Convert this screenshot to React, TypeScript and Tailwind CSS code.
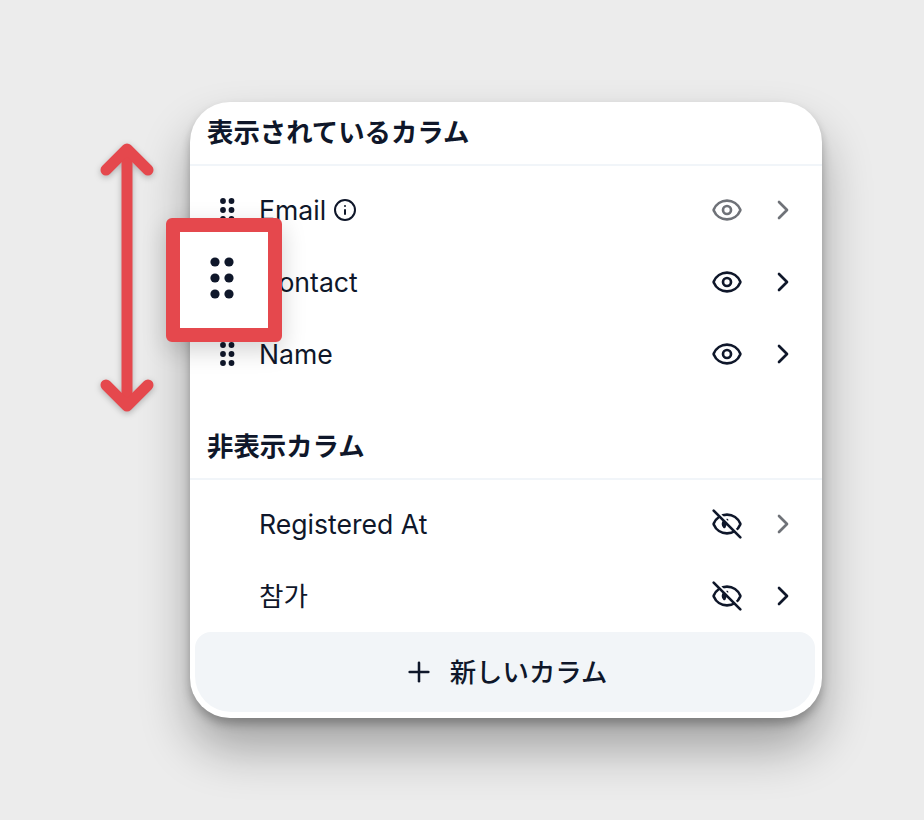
import { Eye, ChevronRight, Info, Plus } from "lucide-react";

const font = "[font-family:Inter,'Noto_Sans_CJK_JP','Noto_Sans_CJK_KR',sans-serif]";

function EyeOffIcon() {
  return (
    <svg width="32" height="32" viewBox="0 0 24 24" fill="none" stroke="currentColor" strokeWidth="2" strokeLinecap="round" strokeLinejoin="round">
      <path d="M2.06 12.35a1 1 0 0 1 0-.7 10.75 10.75 0 0 1 19.88 0 1 1 0 0 1 0 .7 10.75 10.75 0 0 1-19.88 0" />
      <path d="M12 9a3 3 0 0 0-3 3 3 3 0 0 0 1 2.2z" fill="currentColor" />
      <path d="M3.5 1.5l20 20" stroke="#ffffff" strokeWidth="1.4" />
      <path d="M2 2l20 20" />
    </svg>
  );
}

function Grip({ className }: { className?: string }) {
  return (
    <svg className={className} width="20" height="28" viewBox="0 0 20 28" fill="currentColor">
      <circle cx="6" cy="5" r="2.9" />
      <circle cx="14.5" cy="5" r="2.9" />
      <circle cx="6" cy="14" r="2.9" />
      <circle cx="14.5" cy="14" r="2.9" />
      <circle cx="6" cy="23" r="2.9" />
      <circle cx="14.5" cy="23" r="2.9" />
    </svg>
  );
}

function Row({ label, grip, info, hidden, dim, chevDim }: { label: string; grip?: boolean; info?: boolean; hidden?: boolean; dim?: boolean; chevDim?: boolean }) {
  return (
    <div className="flex h-[72px] items-center pl-[27px] pr-[23px]">
      <div className="flex w-[42px] justify-start text-[#0f172a]">{grip && <Grip />}</div>
      <div className="flex flex-1 items-center gap-[7px] text-[26.6px] text-[#0f172a]">
        <span className="pt-[2px]">{label}</span>
        {info && <Info size={24} strokeWidth={2} />}
      </div>
      <div className={dim ? "text-[#6f7278]" : "text-[#0f172a]"}>
        {hidden ? <EyeOffIcon /> : <Eye size={32} strokeWidth={2} />}
      </div>
      <ChevronRight className={`ml-[24px] ${chevDim ? "text-[#6f7278]" : "text-[#0f172a]"}`} size={32} strokeWidth={2} />
    </div>
  );
}

export default function App() {
  return (
    <div className={`relative flex h-[820px] w-[924px] items-start overflow-hidden bg-[#ececec] pl-[190px] pt-[102px] ${font}`}>
      <div className="relative flex h-[616px] w-[632px] flex-col overflow-hidden rounded-[40px] bg-white shadow-[0_30px_50px_rgba(0,0,0,0.32),0_6px_10px_rgba(0,0,0,0.25)]">
        <div className="flex h-[62px] shrink-0 items-center pl-[17px] text-[26.4px] font-semibold text-[#0f172a]">表示されているカラム</div>
        <div className="h-[2px] shrink-0 bg-[#f1f5f9]" />
        <div className="flex shrink-0 flex-col pt-2">
          <Row label="Email" grip info dim chevDim />
          <Row label="Contact" grip />
          <Row label="Name" grip />
        </div>
        <div className="flex h-[88px] shrink-0 items-end pb-[14px] pl-[17px] text-[26.4px] leading-[36px] font-semibold text-[#0f172a]">非表示カラム</div>
        <div className="h-[2px] shrink-0 bg-[#f1f5f9]" />
        <div className="flex shrink-0 flex-col pt-2">
          <Row label="Registered At" hidden chevDim />
          <Row label="참가" hidden />
        </div>
        <div className="ml-[5px] mr-[7px] flex h-[80px] shrink-0 items-center justify-center gap-[15px] rounded-t-[16px] rounded-b-[36px] bg-[#f2f5f8] text-[26.4px] font-medium text-[#0f172a]">
          <Plus size={32} strokeWidth={1.9} />
          <span className="pt-[2px]">新しいカラム</span>
        </div>
      </div>

      <div className="absolute left-[166px] top-[218px] flex h-[124px] w-[116px] items-center justify-center rounded-[6px] border-[14px] border-[#e5484d] bg-white pb-[4px] pr-[4px] shadow-[0_8px_24px_rgba(0,0,0,0.18)]">
        <svg className="blur-[0.6px] text-[#0f172a]" width="34" height="52" viewBox="0 0 34 52" fill="currentColor">
          <circle cx="10" cy="10" r="4.6" />
          <circle cx="24" cy="10" r="4.6" />
          <circle cx="10" cy="26" r="4.6" />
          <circle cx="24" cy="26" r="4.6" />
          <circle cx="10" cy="42" r="4.6" />
          <circle cx="24" cy="42" r="4.6" />
        </svg>
      </div>

      <svg className="absolute left-[90px] top-[135px] drop-shadow-[0_2px_3px_rgba(0,0,0,0.25)]" width="76" height="285" viewBox="0 0 76 285" fill="none" stroke="#e5484d" strokeWidth="11" strokeLinecap="round" strokeLinejoin="round">
        <path d="M37 15V270" />
        <path d="M16 35L37 14L58 35" />
        <path d="M16 250L37 271L58 250" />
      </svg>
    </div>
  );
}
